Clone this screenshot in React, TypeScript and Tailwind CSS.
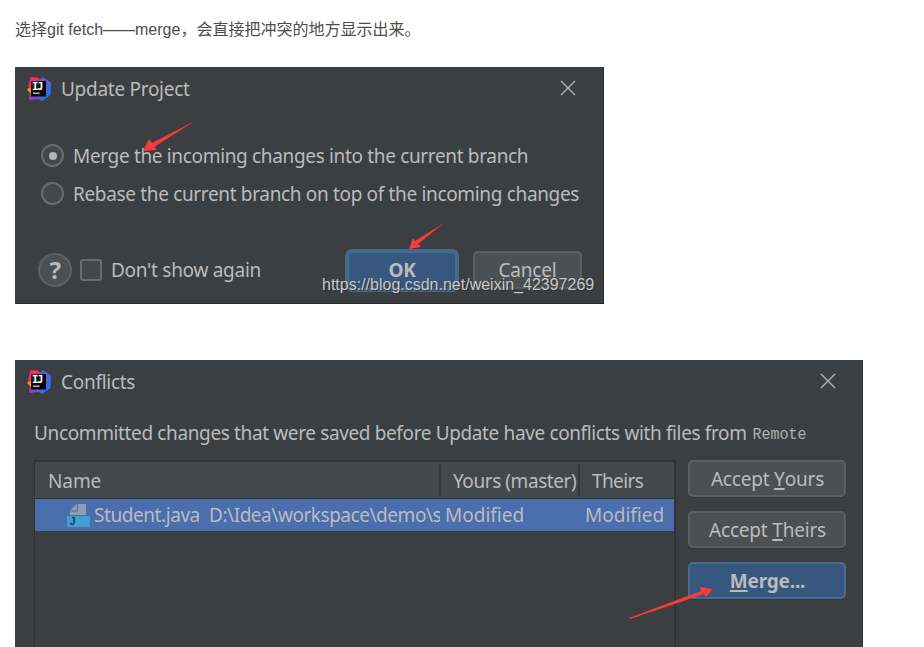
import type { ReactNode } from 'react';

function Logo() {
  return (
    <svg width="26" height="26" viewBox="0 0 26 26" className="block shrink-0">
      <defs>
        <linearGradient id="blue" x1="0" y1="0" x2="1" y2="1">
          <stop offset="0" stopColor="#2f6df0" />
          <stop offset="0.45" stopColor="#6b57d8" />
          <stop offset="0.7" stopColor="#2b6ff0" />
          <stop offset="1" stopColor="#2879f5" />
        </linearGradient>
        <linearGradient id="purple" x1="0" y1="0" x2="1" y2="0">
          <stop offset="0" stopColor="#b535a8" />
          <stop offset="1" stopColor="#4a5be8" />
        </linearGradient>
        <linearGradient id="black" x1="0" y1="0" x2="1" y2="1">
          <stop offset="0" stopColor="#3a3236" />
          <stop offset="0.5" stopColor="#050505" />
        </linearGradient>
      </defs>
      <path d="M4 16 L3 24 L13 23 L14 16 Z" fill="url(#purple)" />
      <path d="M1 14 L5 9.500 L8 12 L6 19 Z" fill="#f98a1d" />
      <path d="M4.500 1 L12 1.500 L16 6 L5 12.500 L2 11 Z" fill="#fb2a59" />
      <path d="M12 5 L17 1 L25 6.500 L24.500 19 L16 25 L11 22 Z" fill="url(#blue)" />
      <rect x="5" y="5" width="15" height="15.500" fill="url(#black)" />
      <text x="6" y="14" fontSize="10.500" fontWeight="700" fontFamily="DejaVu Sans Mono" letterSpacing="-1.300" fill="#fff">IJ</text>
      <rect x="7" y="16.500" width="6.500" height="1.500" fill="#b8b8b8" />
    </svg>
  );
}

function Close() {
  return (
    <svg width="16" height="16" viewBox="0 0 16 16" className="mb-[2px] block" stroke="#b4b4b4" strokeWidth="1.400">
      <path d="M1 1 L15 15 M15 1 L1 15" />
    </svg>
  );
}

function TitleBar({ title, end }: { title: ReactNode; end: string }) {
  return (
    <div className={`flex h-[43px] items-center pl-[11px] ${end}`}>
      <Logo />
      <span className="ml-[9px] flex-1 tracking-[-0.28px]">{title}</span>
      <Close />
    </div>
  );
}

function Radio({ on }: { on?: boolean }) {
  return (
    <span className="mb-px flex size-[23px] shrink-0 items-center justify-center rounded-full border-2 border-[#6b6b6b] bg-[#43494a]">
      {on && <span className="size-2 rounded-full bg-[#b5b5b5]" />}
    </span>
  );
}

function SideButton({ children, primary }: { children: ReactNode; primary?: boolean }) {
  return (
    <div
      className={`flex h-[37px] w-[158px] items-center justify-center rounded-[5px] border-2 pt-px pl-px shadow-[0_1px_1px_#353739] ${
        primary ? 'border-[#4a6d8f] bg-[#365880] font-bold' : 'border-[#5c6061] bg-[#4c5052]'
      }`}
    >
      {children}
    </div>
  );
}

function Key({ children }: { children: ReactNode }) {
  return <span className="underline decoration-2 underline-offset-[2px] [text-decoration-skip-ink:none]">{children}</span>;
}

function FileIcon() {
  return (
    <svg width="24" height="24" viewBox="0 0 24 24" className="mt-[2px] block shrink-0">
      <path d="M11 0 H19 V11 H3 V7.500 H11 Z" fill="#909daf" />
      <path d="M3 6.500 L10 0 V6.500 Z" fill="#909daf" />
      <rect x="0" y="12" width="23" height="11" fill="#409fd3" />
      <text x="3" y="21" fontSize="10" fontWeight="700" fontFamily="Liberation Sans" fill="#2b3540">J</text>
    </svg>
  );
}

function Arrow({ d }: { d: string }) {
  return <path d={d} fill="#fb3b36" />;
}

export default function App() {
  return (
    <div className="relative h-[647px] w-[924px] overflow-hidden bg-white pl-[15px] font-['Noto_Sans',sans-serif] text-[19px] leading-6 tracking-[-0.34px] whitespace-pre text-[#bbbbbb]">
      <p className="h-[67px] pt-[18px] font-['Liberation_Sans','Noto_Sans_CJK_SC',sans-serif] text-[16px] tracking-normal text-[#4d4d4d]">
        选择git fetch——merge，会直接把冲突的地方显示出来。
      </p>

      <section className="relative h-[237px] w-[589px] border-r border-b border-[#2b2b2b] bg-[#3c3f41]">
        <TitleBar title="Update Project" end="pr-[27px]" />
        <div className="flex flex-col gap-[14px] pt-[34px] pl-[26px]">
          <div className="flex h-6 items-center gap-[9px]">
            <Radio on />
            <span>Merge the incoming changes into the current branch</span>
          </div>
          <div className="flex h-6 items-center gap-[9px]">
            <Radio />
            <span>Rebase the current branch on top of the incoming changes</span>
          </div>
        </div>
        <div className="mt-[42px] flex h-[44px] items-center pl-[23px]">
          <span className="flex size-[34px] items-center justify-center rounded-full border-2 border-[#5e6162] bg-[#4c5052] text-[24px] font-bold">?</span>
          <span className="mb-px ml-2 size-[22px] rounded-[3px] border-2 border-[#6b6b6b] bg-[#43494a]" />
          <span className="ml-[9px] w-[234px] tracking-[-0.28px]">Don't show again</span>
          <span className="flex h-[43px] w-[114px] items-center justify-center rounded-[7px] border-[3px] border-[#43698e] bg-[#365880] font-bold shadow-[inset_0_0_0_1px_#4c708c]">OK</span>
          <span className="ml-[14px] flex h-[38px] w-[109px] items-center justify-center rounded-[5px] border-2 border-[#5c6061] bg-[#4c5052] tracking-[-0.2px]">Cancel</span>
        </div>
        <span className="absolute top-[206px] left-[307px] font-['Liberation_Sans',sans-serif] text-[16px] tracking-normal text-[#c8c8c8] [text-shadow:1px_1px_1px_#333]">
          https://blog.csdn.net/weixin_42397269
        </span>
      </section>

      <section className="mt-14 h-[287px] w-[848px] border-r border-[#2b2b2b] bg-[#3c3f41]">
        <TitleBar title="Conflicts" end="pr-[26px]" />
        <div className="flex h-[57px] items-center pt-[3px] pl-[19px]">
          <span className="tracking-[-0.37px]">Uncommitted changes that were saved before Update have conflicts with files from</span>
          <span className="ml-[6px] scale-y-115 pt-[3px] font-['Liberation_Mono',monospace] text-[15px] tracking-normal text-[#b0b0b0]">Remote</span>
        </div>
        <div className="flex pl-[19px]">
          <div className="h-[187px] w-[642px] border-t-2 border-r-2 border-l border-[#323334]">
            <div className="flex h-[37px] items-center border-b border-[#323334] bg-[#45484a]">
              <span className="w-[404px] pt-[2px] pl-[13px] tracking-[-0.1px]">Name</span>
              <span className="h-8 w-[139px] border-l-2 border-[#35383a] pt-[5px] pl-[12px] tracking-[-0.43px]">Yours (master)</span>
              <span className="h-8 border-l-2 border-[#35383a] pt-[5px] pl-[12px] tracking-[-0.6px]">Theirs</span>
            </div>
            <div className="flex h-8 items-center bg-[#4b6eaf]">
              <div className="flex w-[405px] items-center overflow-hidden pl-[32px]">
                <FileIcon />
                <span className="ml-[3px] w-[115px] shrink-0 tracking-[-0.43px]">Student.java</span>
                <span className="tracking-[-0.46px]">D:\Idea\workspace\demo\s</span>
              </div>
              <span className="w-[140px] pl-[5px] tracking-normal">Modified</span>
              <span className="pl-[5px] tracking-normal">Modified</span>
            </div>
          </div>
          <div className="ml-3 flex flex-col gap-[14px] tracking-[-0.2px]">
            <SideButton>Accept <Key>Y</Key>ours</SideButton>
            <SideButton>Accept <Key>T</Key>heirs</SideButton>
            <SideButton primary><Key>M</Key>erge...</SideButton>
          </div>
        </div>
      </section>

      <svg className="pointer-events-none absolute inset-0" width="924" height="647">
        <Arrow d="M195 121 L152 143 L149 139 L143 151 L157 150 L154 147 Z" />
        <Arrow d="M444 223 L415 241 L413 238 L409 249 L421 247 L418 244 Z" />
        <Arrow d="M629 618 L701 591 L700 587 L713 589 L706 597 L704 594 L630 619 Z" />
      </svg>
    </div>
  );
}
